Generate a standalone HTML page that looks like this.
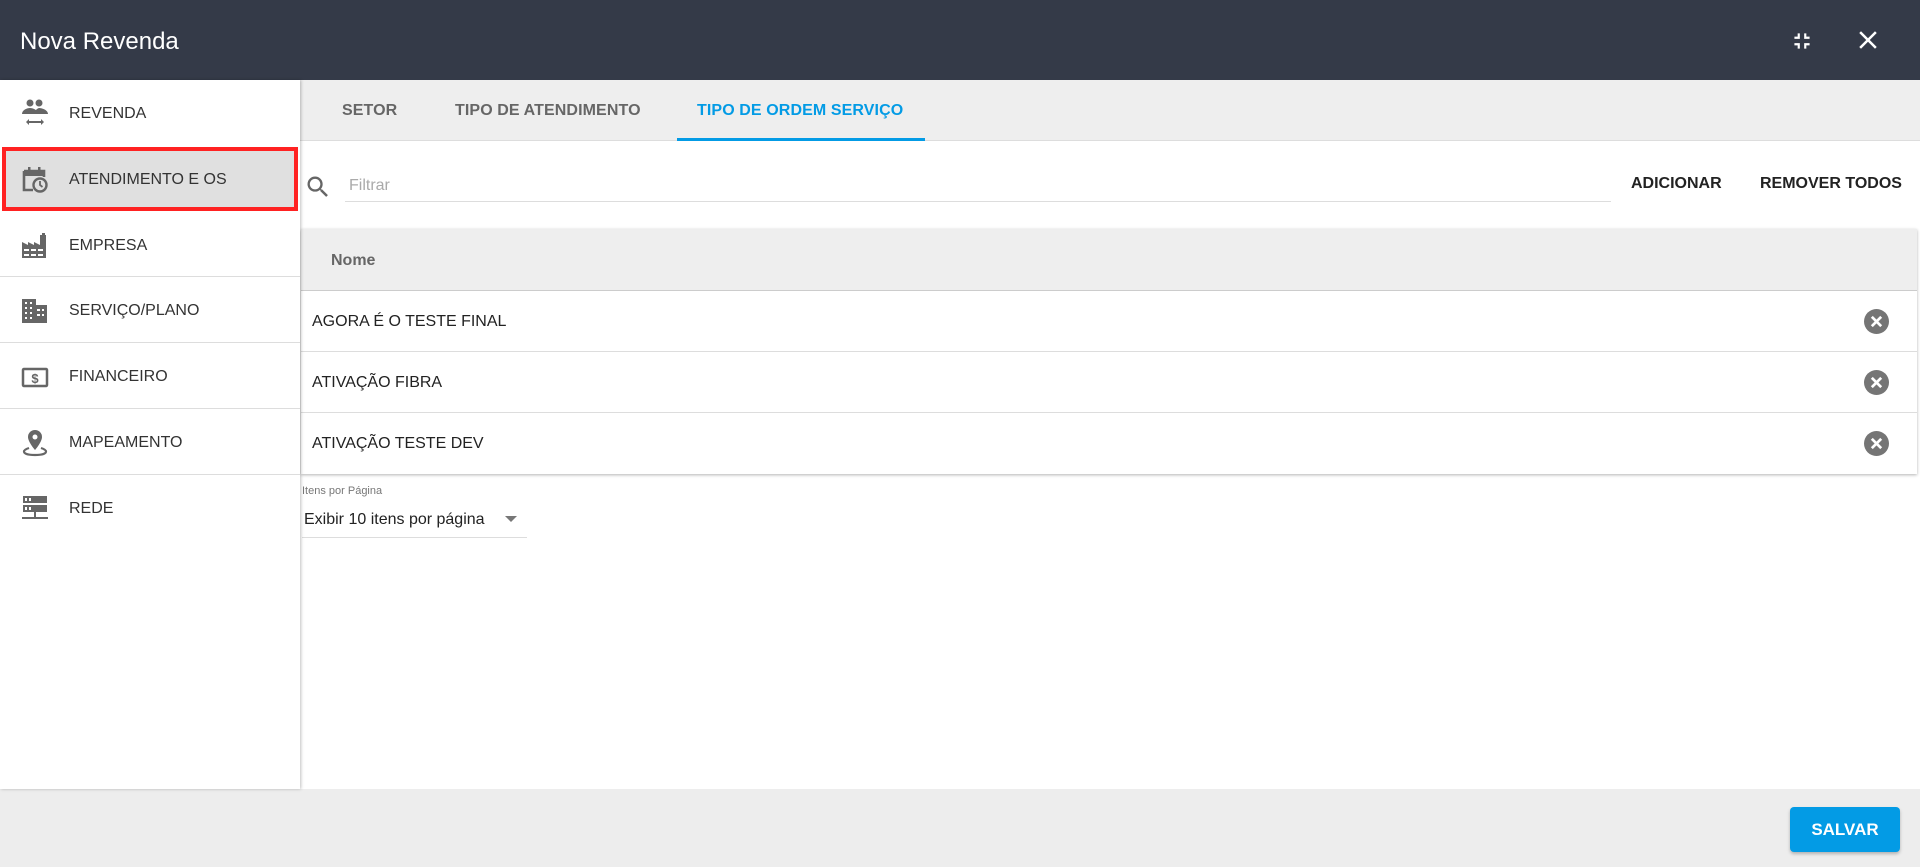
<!DOCTYPE html>
<html><head><meta charset="utf-8"><style>
*{box-sizing:border-box;margin:0;padding:0}
body{width:1920px;height:867px;overflow:hidden;font-family:"Liberation Sans",Arial,sans-serif;background:#fff;position:relative}
.hdr{position:absolute;left:0;top:0;width:1920px;height:80px;background:#343a48}
.hdr .t{position:absolute;left:20px;top:28px;font-size:24px;color:#fff}
.side{position:absolute;left:0;top:80px;width:300px;height:709px;background:#fff;box-shadow:1px 0 3px rgba(0,0,0,.25);z-index:2}
.it{position:absolute;left:0;width:300px;height:66px;font-size:16px;color:#333}
.it span{position:absolute;left:69px;top:25px}
.it svg{position:absolute;left:21px;top:19px}
.div{position:absolute;left:0;width:300px;height:1px;background:#ddd}
.tabs{position:absolute;left:300px;top:80px;width:1620px;height:61px;background:#eee;border-bottom:1px solid #ddd}
.tab{position:absolute;top:22px;font-size:16px;color:#666;font-weight:bold;letter-spacing:.1px}
.btn{position:absolute;top:175px;font-size:16px;color:#222;font-weight:bold}
.tbl{position:absolute;left:301px;top:229px;width:1616px;height:245px;box-shadow:0 1px 3px rgba(0,0,0,.3);background:#fff}
.th{height:62px;background:#eee;border-bottom:1px solid #ccc;position:relative}
.th span{position:absolute;left:30px;top:23px;font-weight:bold;color:#666;font-size:16px}
.row{height:61px;border-bottom:1px solid #ddd;position:relative;font-size:16px;color:#222}
.row span{position:absolute;left:11px;top:22px}
.row svg{position:absolute;left:1563px;top:18px}
.foot{position:absolute;left:0;top:789px;width:1920px;height:78px;background:#ededed}
.salvar{position:absolute;left:1790px;top:18px;width:110px;height:45px;background:#039be5;border-radius:4px;color:#fff;font-weight:bold;font-size:17px;text-align:center;line-height:45px;box-shadow:0 2px 3px rgba(0,0,0,.25)}
</style></head><body>
<div class="hdr"><div class="t">Nova Revenda</div>
<svg style="position:absolute;left:1789px;top:28px" width="26" height="26" viewBox="0 0 24 24"><path fill="#fff" d="M5 16h3v3h2v-5H5v2zm3-8H5v2h5V5H8v3zm6 11h2v-3h3v-2h-5v5zm2-11V5h-2v5h5V8h-3z"/></svg>
<svg style="position:absolute;left:1853px;top:25px" width="30" height="30" viewBox="0 0 24 24"><path fill="#fff" d="M19 6.41L17.59 5 12 10.59 6.41 5 5 6.41 10.59 12 5 17.59 6.41 19 12 13.41 17.59 19 19 17.59 13.41 12z"/></svg>
</div>
<div class="side">
<div class="it" style="top:0"><svg width="28" height="30" viewBox="0 0 28 30"><circle cx="9" cy="4" r="3.5" fill="#666"/><circle cx="18" cy="4" r="3.5" fill="#666"/><path fill="#666" d="M1 15c0-4 5-6 8-6s8 2 8 6zM14 15c0-3 1-5 4-6 3 0 9 2 9 6z"/><path fill="#666" d="M8 22h12v-2l3 3-3 3v-2H8v2l-3-3 3-3z"/></svg><span>REVENDA</span></div>
<div style="position:absolute;left:2px;top:67px;width:296px;height:64px;border:4px solid #f22;background:#e0e0e0"></div>
<div class="it" style="top:66px"><svg width="28" height="30" viewBox="0 0 28 30"><path fill="none" stroke="#666" stroke-width="2.6" d="M3 6h20v6M3 6v19h9"/><rect x="7" y="2" width="2.5" height="5" fill="#666"/><rect x="17" y="2" width="2.5" height="5" fill="#666"/><rect x="3" y="6" width="20" height="5" fill="#666"/><circle cx="19" cy="20" r="6.5" fill="none" stroke="#666" stroke-width="2.4"/><path d="M19 16v4l2.5 2" stroke="#666" stroke-width="1.8" fill="none"/></svg><span>ATENDIMENTO E OS</span></div>
<div class="it" style="top:132px"><svg width="28" height="30" viewBox="0 0 28 30"><path fill="#666" d="M1 11l6 3v-3l6 3v-3l6 3V4h2v-2h3v2h1v23H1z"/><path fill="#fff" d="M3 18h5v2H3zM10 18h5v2h-5zM17 18h5v2h-5zM3 23h5v2H3zM10 23h5v2h-5zM17 23h5v2h-5z"/></svg><span>EMPRESA</span></div>
<div class="div" style="top:196px"></div>
<div class="it" style="top:197px"><svg width="28" height="30" viewBox="0 0 28 30"><path fill="#666" d="M1 3h14v6h11v18H1z"/><path fill="#fff" d="M4 6h2v2H4zM9 6h2v2H9zM4 11h2v2H4zM9 11h2v2H9zM4 16h2v2H4zM9 16h2v2H9zM4 21h2v2H4zM9 21h2v2H9zM16 13h3v2h-3zM21 13h2v2h-2zM16 18h3v2h-3zM21 18h2v2h-2z"/></svg><span>SERVIÇO/PLANO</span></div>
<div class="div" style="top:262px"></div>
<div class="it" style="top:263px"><svg width="28" height="30" viewBox="0 0 28 30"><rect x="2" y="7" width="24" height="17" rx="1" fill="none" stroke="#666" stroke-width="2.5"/><text x="14" y="21" font-size="13" font-weight="bold" fill="#666" text-anchor="middle" font-family="Liberation Sans">$</text></svg><span>FINANCEIRO</span></div>
<div class="div" style="top:328px"></div>
<div class="it" style="top:329px"><svg width="28" height="30" viewBox="0 0 28 30"><path fill="#666" d="M14 2a7 7 0 0 1 7 7c0 5-7 13-7 13S7 14 7 9a7 7 0 0 1 7-7z"/><circle cx="14" cy="9" r="2.5" fill="#fff"/><path fill="none" stroke="#666" stroke-width="2.2" d="M8 20c-3 1-5 2-5 3.5C3 26 8 27 14 27s11-1 11-3.5c0-1.5-2-2.5-5-3.5"/></svg><span>MAPEAMENTO</span></div>
<div class="div" style="top:394px"></div>
<div class="it" style="top:395px"><svg width="28" height="30" viewBox="0 0 28 30"><rect x="2" y="2" width="24" height="7" fill="#666"/><rect x="2" y="11" width="24" height="7" fill="#666"/><path fill="#fff" d="M4 4h2v3H4zM8 4h2v3H8zM4 13h2v3H4zM8 13h2v3H8z"/><rect x="13" y="18" width="2" height="5" fill="#666"/><rect x="1" y="23" width="26" height="2" fill="#666"/></svg><span>REDE</span></div>
</div>
<div class="tabs">
<div class="tab" style="left:42px">SETOR</div>
<div class="tab" style="left:155px">TIPO DE ATENDIMENTO</div>
<div class="tab" style="left:397px;color:#039be5">TIPO DE ORDEM SERVIÇO</div>
<div style="position:absolute;left:377px;top:58px;width:248px;height:3px;background:#039be5"></div>
</div>
<svg style="position:absolute;left:304px;top:173px" width="28" height="28" viewBox="0 0 24 24"><path fill="#666" d="M15.5 14h-.79l-.28-.27A6.47 6.47 0 0 0 16 9.5 6.5 6.5 0 1 0 9.5 16c1.61 0 3.09-.59 4.23-1.57l.27.28v.79l5 4.99L20.49 19l-4.99-5zm-6 0C7.01 14 5 11.99 5 9.5S7.01 5 9.5 5 14 7.010 14 9.5 11.99 14 9.5 14z"/></svg>
<div style="position:absolute;left:349px;top:177px;font-size:16px;color:#aaa">Filtrar</div>
<div style="position:absolute;left:345px;top:201px;width:1266px;height:1px;background:#ddd"></div>
<div class="btn" style="left:1631px">ADICIONAR</div>
<div class="btn" style="left:1760px">REMOVER TODOS</div>
<div class="tbl">
<div class="th"><span>Nome</span></div>
<div class="row"><span>AGORA É O TESTE FINAL</span><svg width="25" height="25" viewBox="0 0 24 24"><circle cx="12" cy="12" r="12" fill="#757575"/><path d="M7.5 7.5l9 9M16.5 7.5l-9 9" stroke="#fff" stroke-width="2.6"/></svg></div>
<div class="row"><span>ATIVAÇÃO FIBRA</span><svg width="25" height="25" viewBox="0 0 24 24"><circle cx="12" cy="12" r="12" fill="#757575"/><path d="M7.5 7.5l9 9M16.5 7.5l-9 9" stroke="#fff" stroke-width="2.6"/></svg></div>
<div class="row" style="border-bottom:none"><span>ATIVAÇÃO TESTE DEV</span><svg width="25" height="25" viewBox="0 0 24 24"><circle cx="12" cy="12" r="12" fill="#757575"/><path d="M7.5 7.5l9 9M16.5 7.5l-9 9" stroke="#fff" stroke-width="2.6"/></svg></div>
</div>
<div style="position:absolute;left:302px;top:485px;font-size:11px;color:#777">Itens por Página</div>
<div style="position:absolute;left:304px;top:511px;font-size:16px;color:#222">Exibir 10 itens por página</div>
<div style="position:absolute;left:505px;top:516px;width:0;height:0;border-left:6px solid transparent;border-right:6px solid transparent;border-top:6px solid #777"></div>
<div style="position:absolute;left:302px;top:537px;width:225px;height:1px;background:#ddd"></div>
<div class="foot"><div class="salvar">SALVAR</div></div>
</body></html>
